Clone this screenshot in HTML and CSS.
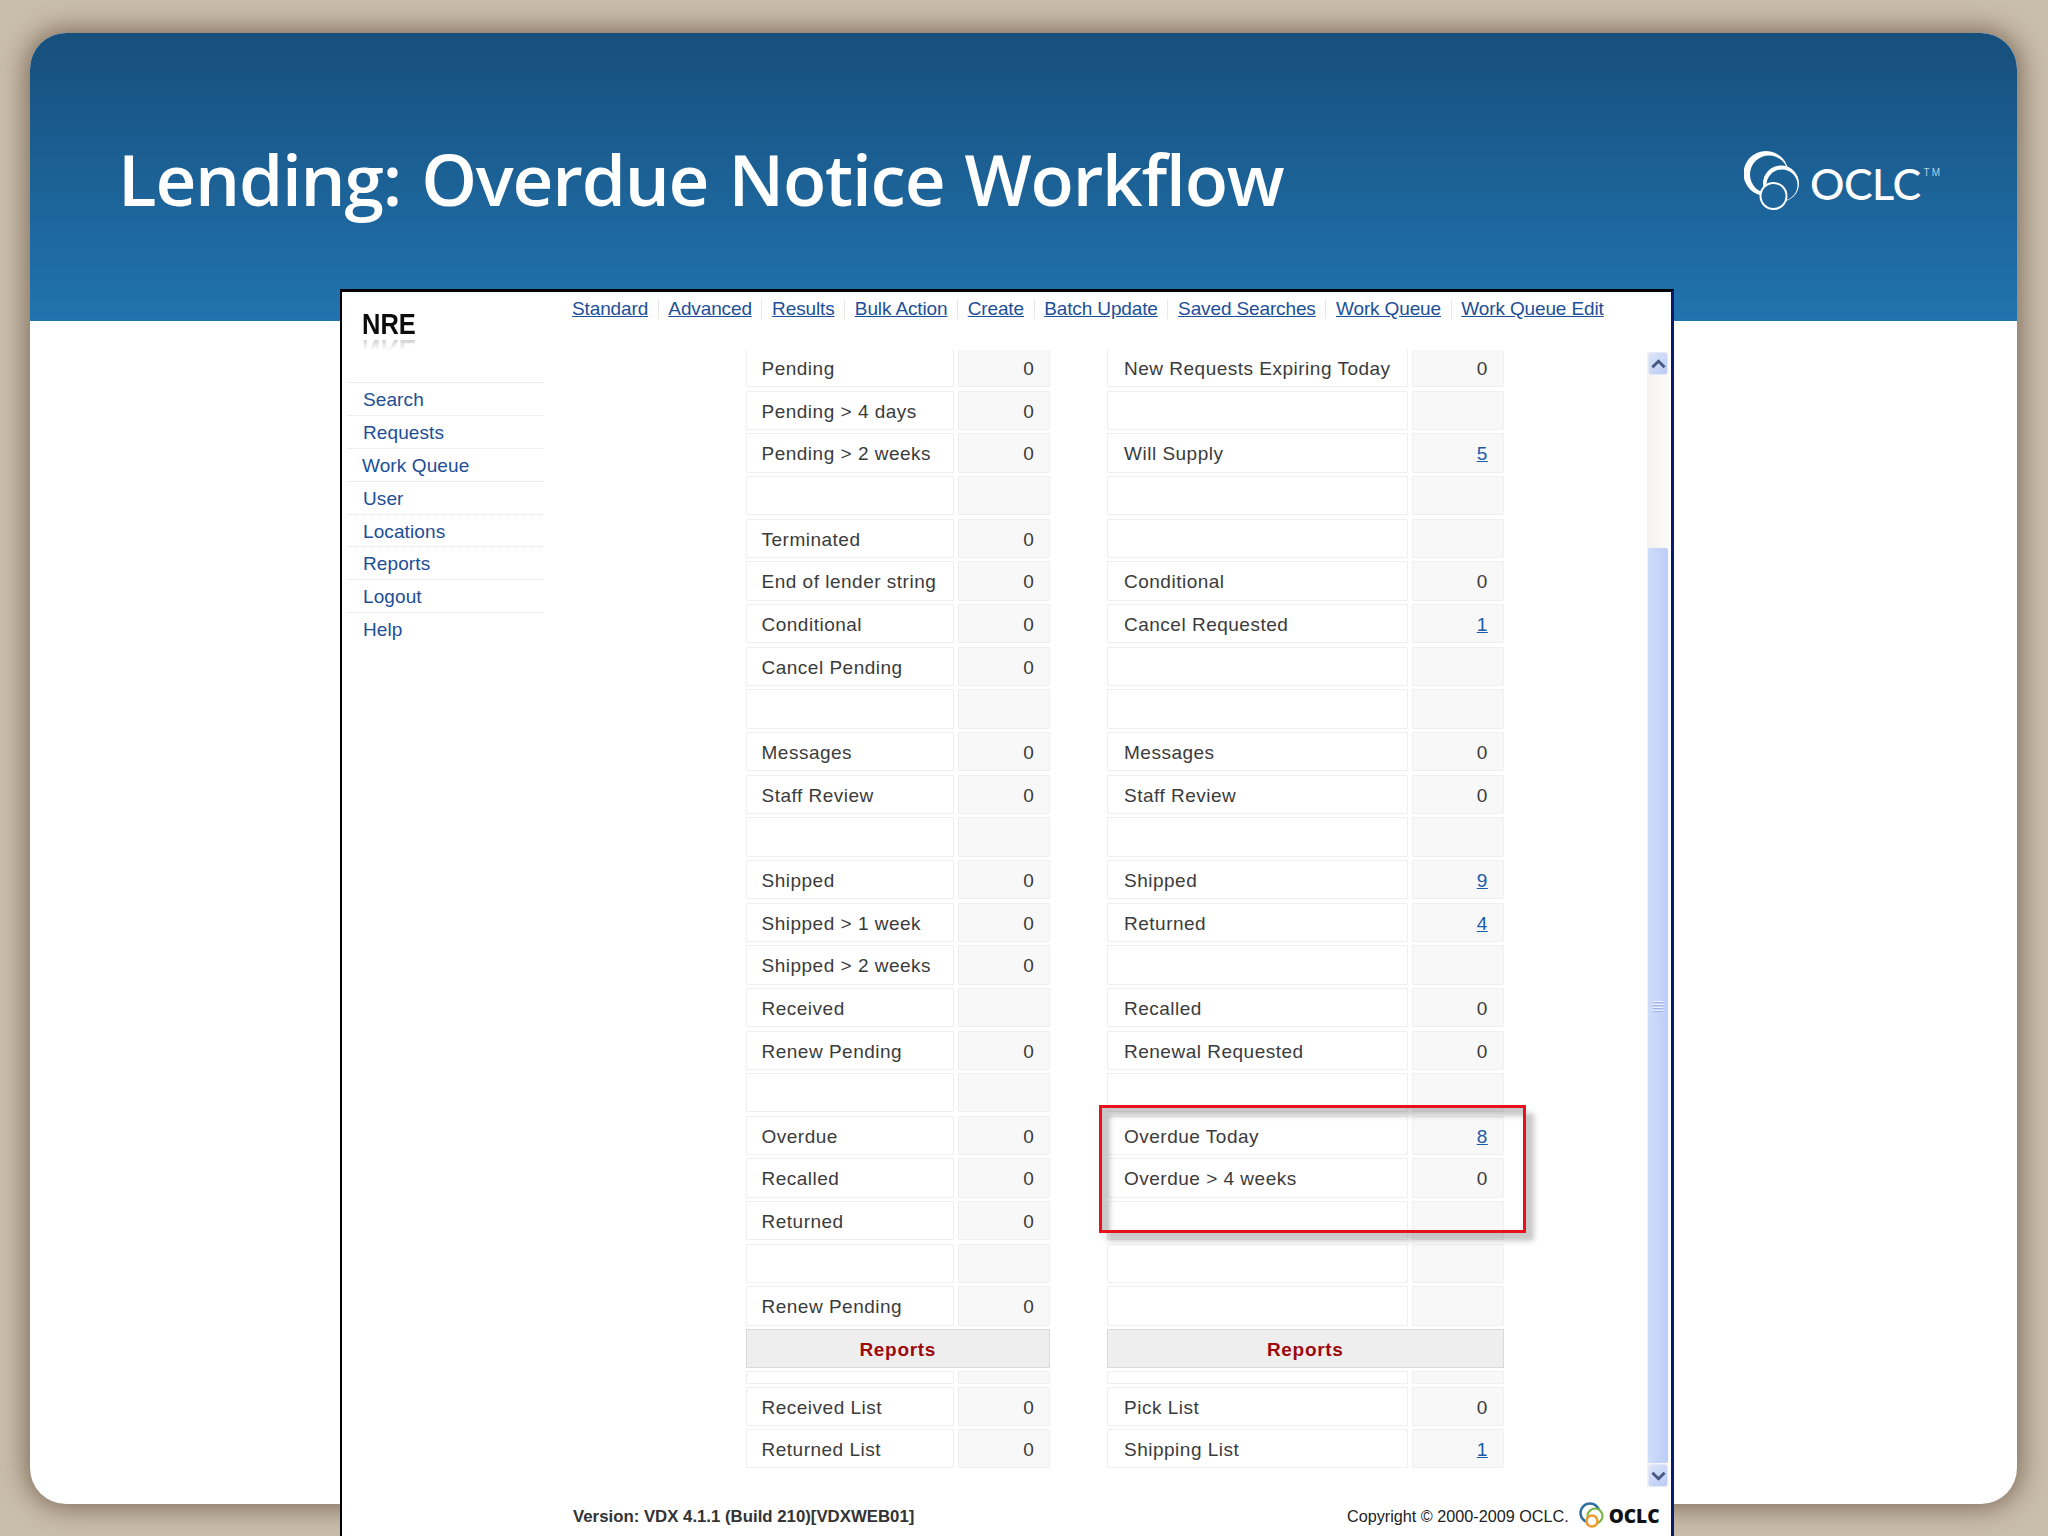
FILE: index.html
```html
<!DOCTYPE html>
<html lang="en">
<head>
<meta charset="utf-8">
<title>Lending: Overdue Notice Workflow</title>
<link rel="stylesheet" href="styles.css">
</head>
<body>
<section class="slide">
  <header class="band">
    <h1 class="title">Lending: Overdue Notice Workflow</h1>
    <div class="brand">
      <svg class="brand-mark" viewBox="0 0 56 60" aria-hidden="true">
        <path fill="#fff" fill-rule="evenodd" d="M22 1a22.500 22.500 0 1 0 0 45a22.500 22.500 0 1 0 0-45zM25 5.500a19 19 0 1 1 0 38a19 19 0 1 1 0-38z"/>
        <circle cx="37" cy="33.500" r="18" fill="#fff"/>
        <circle cx="38" cy="35" r="15.500" fill="#1b6195"/>
        <circle cx="29.500" cy="46" r="13" fill="#1c6499" stroke="#fff" stroke-width="2"/>
      </svg>
      <span class="brand-name">OCLC</span>
      <span class="brand-tm">TM</span>
    </div>
  </header>
</section>

<main class="window">
  <div class="win-top">
    <div class="logo-wrap"><span class="logo">NRE</span></div>
    <nav class="tabs">
      <a href="#">Standard</a><i></i>
      <a href="#">Advanced</a><i></i>
      <a href="#">Results</a><i></i>
      <a href="#">Bulk Action</a><i></i>
      <a href="#">Create</a><i></i>
      <a href="#">Batch Update</a><i></i>
      <a href="#">Saved Searches</a><i></i>
      <a href="#">Work Queue</a><i></i>
      <a href="#">Work Queue Edit</a>
    </nav>
  </div>
  <div class="win-body">
    <ul class="menu">
      <li>Search</li>
      <li>Requests</li>
      <li class="menu-shift">Work Queue</li>
      <li>User</li>
      <li>Locations</li>
      <li>Reports</li>
      <li>Logout</li>
      <li>Help</li>
    </ul>
    <div class="content">
      <div class="tables">
        <div class="grid grid-left" id="left"></div>
        <div class="grid grid-right" id="right"></div>
      </div>
      <div class="scrollbar">
        <div class="sb-btn">
          <svg viewBox="0 0 16 12" class="sb-arrow"><path d="M1.500 9.500 8 3l6.500 6.500" fill="none" stroke="#45587f" stroke-width="3"/></svg>
        </div>
        <div class="sb-track">
          <div class="sb-thumb"><span></span><span></span><span></span><span></span></div>
        </div>
        <div class="sb-btn">
          <svg viewBox="0 0 16 12" class="sb-arrow"><path d="M1.500 2.500 8 9l6.500-6.500" fill="none" stroke="#45587f" stroke-width="3"/></svg>
        </div>
      </div>
    </div>
  </div>
  <footer class="win-foot">
    <span class="version">Version: VDX 4.1.1 (Build 210)[VDXWEB01]</span>
    <span class="copy">Copyright © 2000-2009 OCLC.</span>
    <svg class="mini-mark" viewBox="0 0 26 28" aria-hidden="true">
      <circle cx="11" cy="11" r="9.500" fill="none" stroke="#2f6f9f" stroke-width="2.500"/>
      <circle cx="16" cy="14" r="7.500" fill="#fff" stroke="#7cb342" stroke-width="2.200"/>
      <circle cx="13" cy="19" r="5.500" fill="#fff" stroke="#ef9a2d" stroke-width="2.500"/>
    </svg>
    <span class="mini-name">OCLC</span>
  </footer>
  <div class="callout"></div>
</main>
<script src="app.js"></script>
</body>
</html>
```
FILE: styles.css
```css
* { box-sizing: border-box; }
html, body { margin: 0; height: 1536px; overflow: hidden; }
body {
  position: relative;
  background: #c9bdab;
  padding: 33px 31px 32px 30px;
  font-family: "Liberation Sans", Arial, sans-serif;
}
.slide {
  height: 1471px;
  background: #fff;
  border-radius: 36px;
  overflow: hidden;
  box-shadow: 0 0 26px 4px #7f6d5a;
}
.band {
  height: 288px;
  background: linear-gradient(#174f7c, #2073af);
  display: flex;
  justify-content: space-between;
  padding: 107px 0 0 88px;
}
.title {
  margin: 0;
  color: #fff;
  font: 600 71px/1.1 "Open Sans", sans-serif;
  letter-spacing: -1.200px;
  word-spacing: 3px;
}
.brand {
  display: flex;
  align-items: flex-start;
  color: #fff;
  margin: 10px 75px 0 0;
}
.brand-mark { width: 56px; height: 60px; margin-right: 10px; }
.brand-name {
  font: 500 43px/1 "Lato", sans-serif;
  margin-top: 11.500px;
  letter-spacing: -.5px;
}
.brand-tm {
  font: 400 10px/1 "Liberation Sans", sans-serif;
  margin: 17.500px 0 0 3px;
  letter-spacing: 2px;
  color: #b7cfe2;
}
.window {
  position: absolute;
  left: 340px;
  top: 289px;
  width: 1334px;
  height: 1300px;
  background: #fff;
  border-style: solid;
  border-width: 3px 3px 0 2px;
  border-color: #000 #0a1a6e #000 #000;
}
.win-top { display: flex; height: 58px; }
.logo-wrap { width: 230px; padding: 17px 0 0 20px; }
.logo {
  display: inline-block;
  font: 700 30px/1 "Liberation Sans", sans-serif;
  color: #0c0c0c;
  transform: scaleX(.85);
  transform-origin: left center;
  -webkit-box-reflect: below -4px linear-gradient(transparent 50%, rgba(0,0,0,.28));
}
.tabs {
  display: flex;
  align-items: center;
  height: 34px;
  font-size: 19px;
}
.tabs a { color: #1d4f98; text-decoration: underline; letter-spacing: -.13px; white-space: nowrap; }
.tabs i { width: 1px; height: 20px; background: #e8e8ea; margin: 0 9.650px; }
.win-body { display: flex; height: 1137px; }
.menu {
  list-style: none;
  margin: 32px 0 0 6px;
  padding: 0;
  width: 196px;
  flex: none;
  border-top: 1px dotted #e2e3e6;
  color: #1d4e96;
  font-size: 19px;
  letter-spacing: .1px;
  align-self: flex-start;
}
.menu li {
  height: 32.900px;
  line-height: 33px;
  padding-left: 15px;
  border-bottom: 1px dotted #e2e3e6;
}
.menu li:last-child { border-bottom: 0; }
.menu .menu-shift { padding-left: 14px; }
.content { flex: 1; display: flex; min-width: 0; }
.tables {
  flex: 1;
  display: flex;
  padding-left: 201.500px;
  height: 1122px;
  overflow: hidden;
}
.grid {
  display: grid;
  grid-template-rows: repeat(23, 39.330px) 38.500px 13px 38.400px 39px;
  row-gap: 3.340px;
  column-gap: 4px;
  margin-top: -2px;
  align-content: start;
  font-size: 19px;
  color: #3b3b3b;
  letter-spacing: .5px;
}
.grid-left { grid-template-columns: 208px 92.500px; width: 304.500px; }
.grid-right { grid-template-columns: 300.500px 92px; margin-left: 57px; width: 396.500px; }
.cell {
  border: 1px solid #efeff1;
  border-radius: 1px;
  background: #fff;
  padding: 0 0 0 15px;
  line-height: 39.500px;
  white-space: nowrap;
  overflow: hidden;
}
.grid-right .cell { padding-left: 16px; }
.cell.num, .grid-right .cell.num { background: #f8f8f9; text-align: right; padding: 0 14.700px 0 0; }
.cell.num a { color: #1a5ca8; }
.head {
  grid-column: 1 / -1;
  background: #eeeeef;
  border: 1px solid #d9d9dc;
  color: #9c0a0d;
  font-weight: 700;
  text-align: center;
  line-height: 39.500px;
  letter-spacing: .7px;
}
.scrollbar {
  width: 22px;
  margin: 2px 2px 0 0;
  display: flex;
  flex-direction: column;
  background: linear-gradient(90deg, #f3f2ee, #fbfbf9);
  height: 1135px;
  flex: none;
}
.sb-btn {
  height: 23px;
  flex: none;
  margin: 0 1px;
  border: 1px solid #e4e9f6;
  border-radius: 3px;
  background: linear-gradient(135deg, #dce6fb, #b9c9f3);
  display: flex;
  align-items: center;
  justify-content: center;
}
.sb-arrow { width: 15px; height: 12px; }
.sb-track { flex: 1; display: flex; flex-direction: column; justify-content: flex-end; padding-top: 173px; }
.sb-thumb {
  flex: 1;
  margin: 0 1px 1px;
  background: linear-gradient(90deg, #cfdcfb, #bccef7);
  border-radius: 2px;
  display: flex;
  flex-direction: column;
  justify-content: center;
  align-items: center;
  gap: 2px;
}
.sb-thumb span { width: 10px; height: 1px; background: #eef2fd; box-shadow: 0 1px 0 #9fb2e2; }
.win-foot {
  display: flex;
  align-items: center;
  height: 50px;
  padding: 8px 11.500px 0 231px;
  color: #222;
}
.version { font-weight: 700; font-size: 16.800px; flex: 1; color: #333; padding-top: 2px; }
.copy { font-size: 16.200px; margin-right: 10px; }
.mini-mark { width: 26px; height: 28px; margin-right: 4px; }
.mini-name { font: 800 19px/1 "Open Sans", sans-serif; color: #111; }
.callout {
  position: absolute;
  left: 757px;
  top: 813px;
  width: 427px;
  height: 128px;
  border: 3px solid #e8121c;
  box-shadow: 8px 8px 5px rgba(60,60,60,.28), inset 8px 8px 5px rgba(60,60,60,.28);
}
```
FILE: app.js
```js
var L = [["Pending","0"],["Pending > 4 days","0"],["Pending > 2 weeks","0"],["",""],["Terminated","0"],["End of lender string","0"],["Conditional","0"],["Cancel Pending","0"],["",""],["Messages","0"],["Staff Review","0"],["",""],["Shipped","0"],["Shipped > 1 week","0"],["Shipped > 2 weeks","0"],["Received",""],["Renew Pending","0"],["",""],["Overdue","0"],["Recalled","0"],["Returned","0"],["",""],["Renew Pending","0"],null,["",""],["Received List","0"],["Returned List","0"]];
var R = [["New Requests Expiring Today","0"],["",""],["Will Supply","5",1],["",""],["",""],["Conditional","0"],["Cancel Requested","1",1],["",""],["",""],["Messages","0"],["Staff Review","0"],["",""],["Shipped","9",1],["Returned","4",1],["",""],["Recalled","0"],["Renewal Requested","0"],["",""],["Overdue Today","8",1],["Overdue > 4 weeks","0"],["",""],["",""],["",""],null,["",""],["Pick List","0"],["Shipping List","1",1]];
function build(id, rows) {
  var g = document.getElementById(id);
  rows.forEach(function (r) {
    if (r === null) {
      var h = document.createElement("div");
      h.className = "head"; h.textContent = "Reports"; g.appendChild(h); return;
    }
    var a = document.createElement("div"), b = document.createElement("div");
    a.className = "cell"; b.className = "cell num";
    a.textContent = r[0];
    if (r[2]) { var l = document.createElement("a"); l.href = "#"; l.textContent = r[1]; b.appendChild(l); }
    else b.textContent = r[1];
    g.appendChild(a); g.appendChild(b);
  });
}
build("left", L);
build("right", R);
```
